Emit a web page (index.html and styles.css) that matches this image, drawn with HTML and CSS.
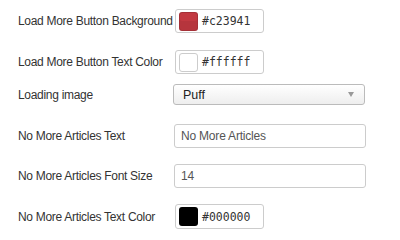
FILE: index.html
```html
<!DOCTYPE html>
<html>
<head>
    <title>Load More Settings</title>
    <link rel="stylesheet" href="styles.css">
</head>
<body>
    <div class="form">
        <div class="row row-color1">
            <label class="label">Load More Button Background</label>
            <div class="color-box">
                <span class="swatch" style="background-color: #c23941;"></span>
                <span class="hex">#c23941</span>
            </div>
        </div>
        <div class="row row-color2">
            <label class="label">Load More Button Text Color</label>
            <div class="color-box">
                <span class="swatch swatch-light" style="background-color: #ffffff;"></span>
                <span class="hex">#ffffff</span>
            </div>
        </div>
        <div class="row row-select">
            <label class="label">Loading image</label>
            <div class="select">
                <span>Puff</span>
                <span class="arrow"></span>
            </div>
        </div>
        <div class="row row-text">
            <label class="label">No More Articles Text</label>
            <input class="text-input" type="text" value="No More Articles">
        </div>
        <div class="row row-text">
            <label class="label">No More Articles Font Size</label>
            <input class="text-input" type="text" value="14">
        </div>
        <div class="row row-last">
            <label class="label">No More Articles Text Color</label>
            <div class="color-box">
                <span class="swatch" style="background-color: #000000;"></span>
                <span class="hex">#000000</span>
            </div>
        </div>
    </div>
</body>
</html>
```

FILE: styles.css
```css
body { margin: 0; padding: 9px 0 0 18px; background: #fff; font-family: "Liberation Sans", Arial, sans-serif; font-size: 12px; color: #333; }
.form { display: flex; flex-direction: column; }
.row { display: flex; align-items: center; height: 24px; }
.row-color1 { margin-bottom: 17px; }
.row-color2 { margin-bottom: 10px; }
.row-select { height: 21px; margin-bottom: 19px; }
.row-text { margin-bottom: 16px; }
.row-last { height: 25px; }
.label { width: 157px; flex: none; white-space: nowrap; letter-spacing: -0.3px; }
.color-box { box-sizing: border-box; width: 89px; height: 100%; border: 1px solid #ccc; border-radius: 3px; display: flex; align-items: center; padding-left: 3px; }
.swatch { box-sizing: border-box; width: 19px; height: 19px; border-radius: 3px; margin-right: 4px; border: 1px solid rgba(0,0,0,0.15); box-shadow: inset 0 -9px 0 rgba(0,0,0,0.06); }
.swatch-light { border-color: #ccc; box-shadow: none; }
.hex { font-family: "DejaVu Sans Mono", monospace; font-size: 11.5px; color: #333; }
.select { box-sizing: border-box; width: 192px; height: 21px; margin-left: -2px; border: 1px solid #bbb; border-radius: 3px; background: linear-gradient(#fff, #eee); display: flex; align-items: center; justify-content: space-between; padding: 0 10px 0 9px; color: #222; font-size: 12.5px; }
.arrow { width: 0; height: 0; border-left: 3px solid transparent; border-right: 3px solid transparent; border-top: 5px solid #999; }
.text-input { box-sizing: border-box; width: 192px; height: 24px; margin: 0 0 0 -1px; border: 1px solid #ccc; border-radius: 3px; padding: 0 6px; font-family: "Liberation Sans", Arial, sans-serif; font-size: 12px; letter-spacing: -0.2px; color: #555; }
```
